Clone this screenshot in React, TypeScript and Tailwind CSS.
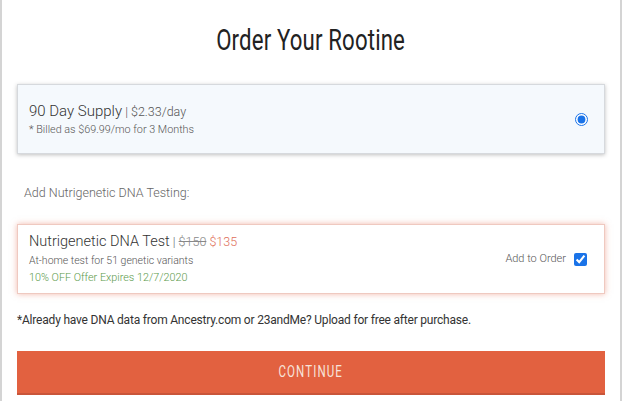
import { useState } from "react";

export default function App() {
  const [addDna, setAddDna] = useState(true);

  return (
    <div className="w-[624px] h-[401px] bg-white overflow-hidden">
      <div className="w-[622px] h-[401px] border-x-2 border-[#d4d4d4] px-[15px]" style={{ fontFamily: "Roboto, sans-serif" }}>
        {/* 見出し */}
        <div className="flex justify-center pt-[22px] h-[84px]">
          <h1 className="text-[30px] leading-[36px] text-[#222] font-normal inline-block scale-x-[0.74] origin-center tracking-[0.2px]">
            Order Your Rootine
          </h1>
        </div>

        {/* 90日プラン */}
        <label className="h-[70px] flex items-center justify-between bg-[#f5f9fd] border border-[#d6d9dd] shadow-[0_1px_4px_rgba(0,0,0,0.25)] pl-[11px] pr-[16px]">
          <div>
            <p className="text-[15px] leading-[21px] font-light text-[#333]">
              90 Day Supply
              <span className="text-[12.5px] text-[#555]"> | $2.33/day</span>
            </p>
            <p className="text-[10.8px] leading-[16px] font-light text-[#555]">* Billed as $69.99/mo for 3 Months</p>
          </div>
          <input type="radio" defaultChecked name="plan" className="w-[13px] h-[13px] accent-[#1a73e8]" />
        </label>

        <p className="text-[12.5px] leading-[16px] font-light text-[#666] pl-[7px] mt-[31px] mb-[23px]">
          Add Nutrigenetic DNA Testing:
        </p>

        {/* DNA検査 */}
        <div className="h-[70px] flex items-center justify-between bg-white border border-[#efc9c0] shadow-[0_0_6px_rgba(229,115,90,0.5)] pl-[11px] pr-[17px]">
          <div>
            <p className="text-[14.5px] leading-[20px] font-light text-[#333]">
              Nutrigenetic DNA Test
              <span className="text-[12.5px] text-[#666]"> | </span>
              <span className="text-[12.5px] text-[#888] line-through">$150</span>
              <span className="text-[12.5px] text-[#e0705a]"> $135</span>
            </p>
            <p className="text-[10.5px] leading-[17px] font-light text-[#555]">At-home test for 51 genetic variants</p>
            <p className="text-[10.8px] leading-[17px] font-light text-[#5c9a4b]">10% OFF Offer Expires 12/7/2020</p>
          </div>
          <label className="flex items-center gap-[8px] text-[11px] font-light text-[#555]">
            Add to Order
            <input
              type="checkbox"
              checked={addDna}
              onChange={() => setAddDna(!addDna)}
              className="w-[13px] h-[13px] accent-[#1a73e8]"
            />
          </label>
        </div>

        <p className="text-[12px] leading-[16px] text-[#333] tracking-[-0.2px] mt-[18px] mb-[23px]">
          *Already have DNA data from Ancestry.com or 23andMe? Upload for free after purchase.
        </p>

        <button className="w-full h-[44px] bg-[#e26140] border-b-2 border-[#c9553a] flex items-center justify-center">
          <span className="text-[16px] text-[#f7e3da] tracking-[1.5px] inline-block scale-x-[0.72]">CONTINUE</span>
        </button>
      </div>
    </div>
  );
}
